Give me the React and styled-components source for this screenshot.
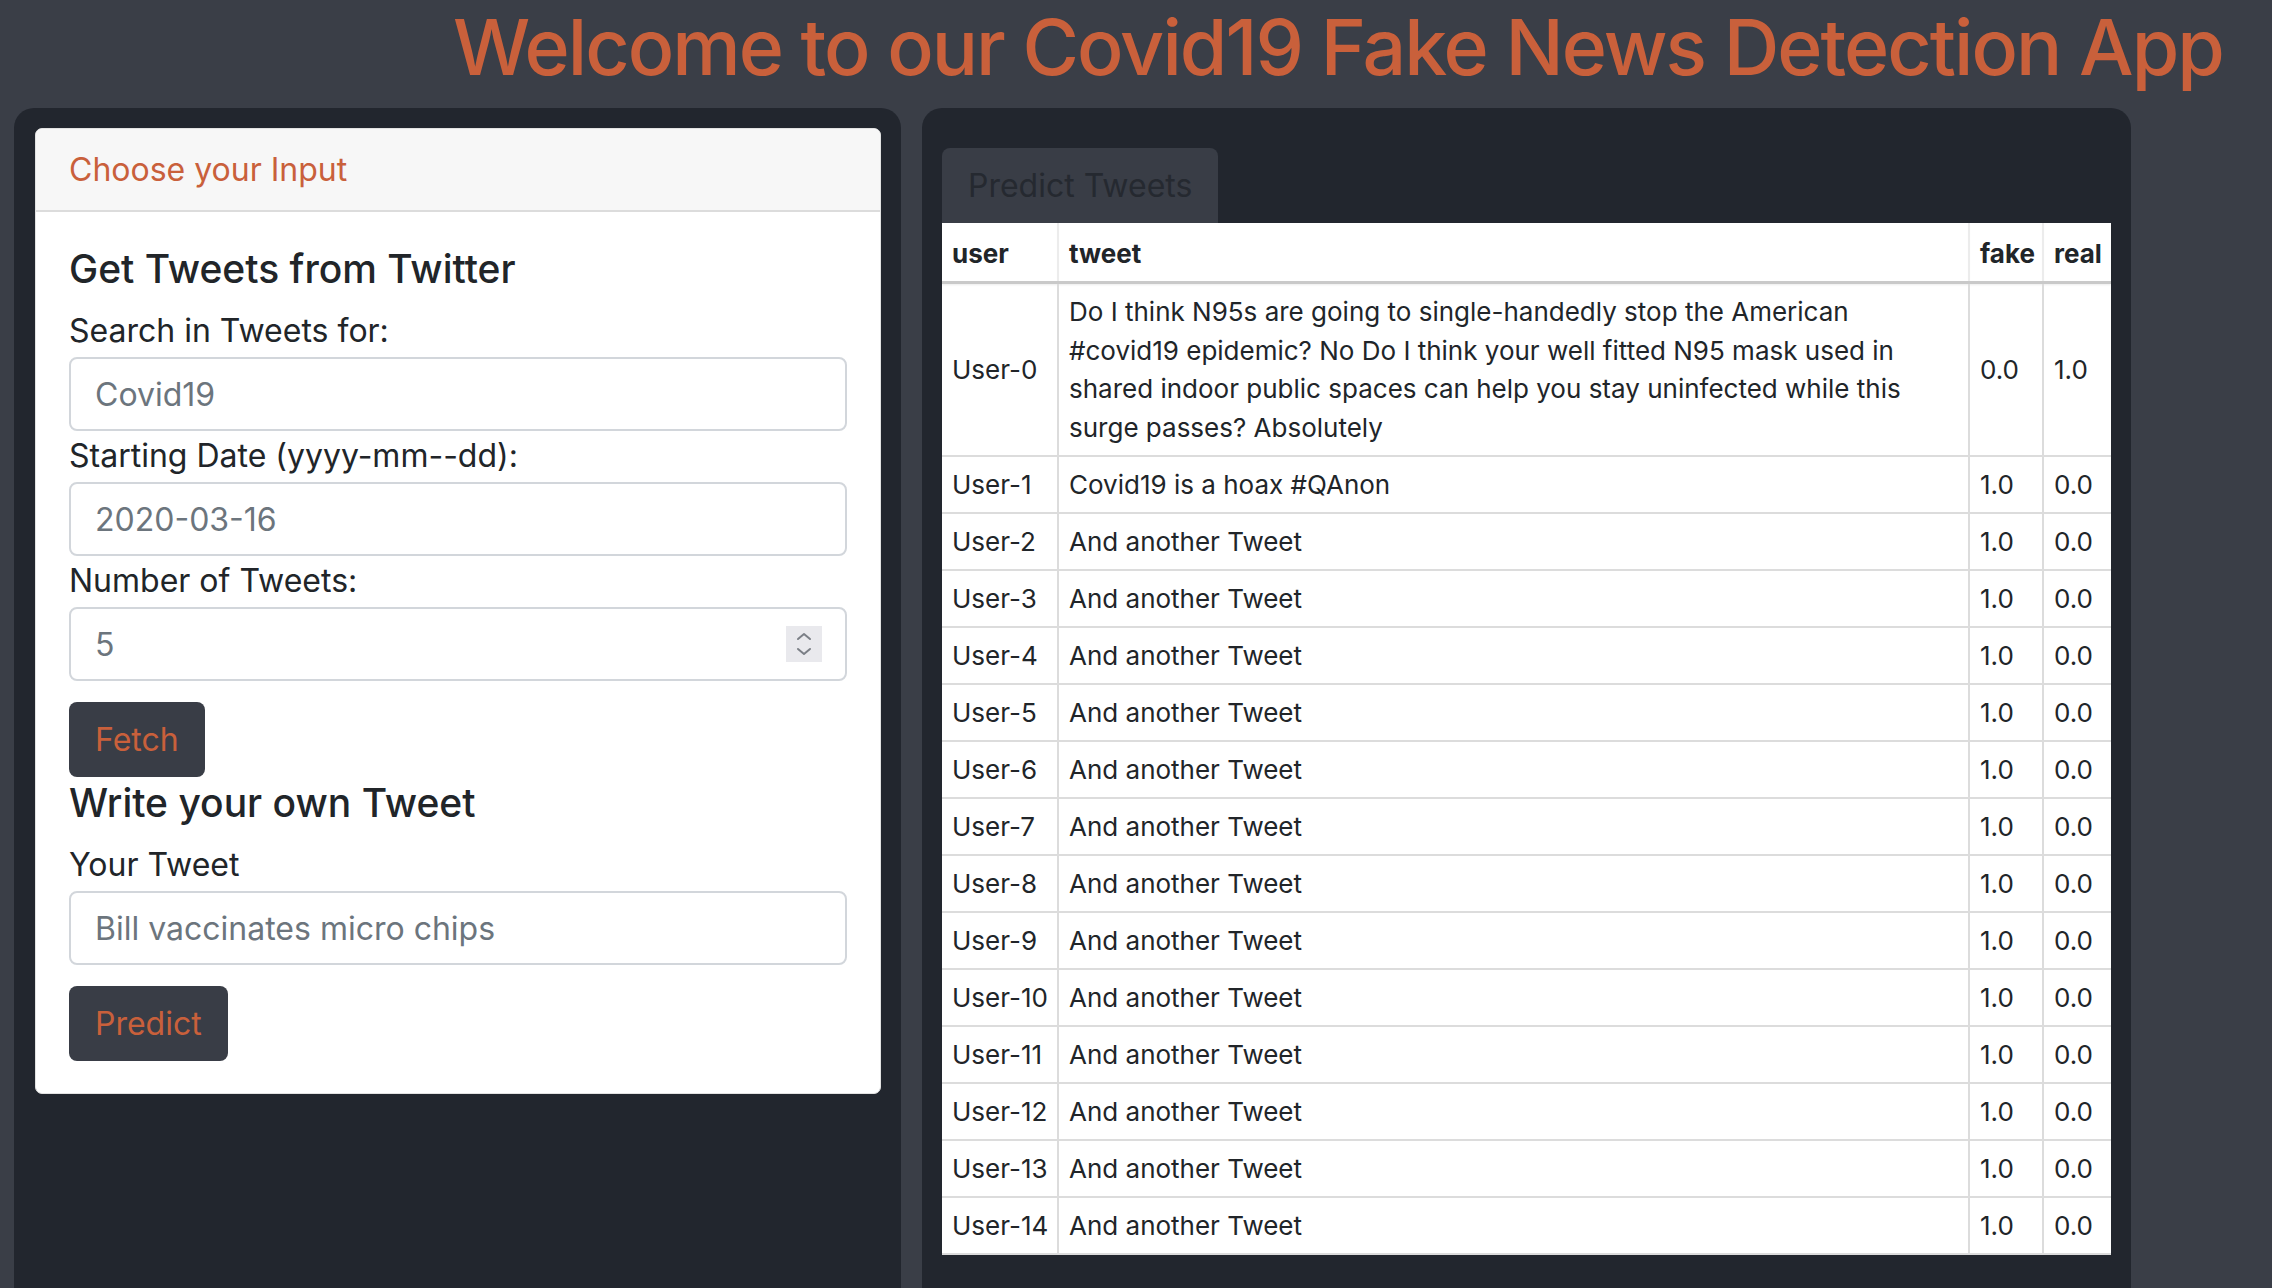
import React from "react";
import styled, { createGlobalStyle } from "styled-components";

const GlobalStyle = createGlobalStyle`
  html, body { margin: 0; padding: 0; }
  body {
    background: #3a3e47;
    font-family: Inter, "Noto Sans", sans-serif;
    color: #212529;
  }
  * { box-sizing: border-box; }
`;

const ORANGE = "#c9603b";

const Page = styled.div`
  width: 2272px;
  height: 1288px;
  overflow: hidden;
  display: flex;
  flex-direction: column;
`;

const Header = styled.header`
  height: 108px;
  flex: none;
  padding: 0 49px 0 0;
  display: flex;
  justify-content: flex-end;
  align-items: flex-start;
`;

const Title = styled.h1`
  margin: 0;
  font-size: 77px;
  line-height: 94px;
  font-weight: 500;
  letter-spacing: -1.95px;
  color: ${ORANGE};
  white-space: nowrap;
`;

const Main = styled.main`
  flex: 1;
  display: flex;
  gap: 21px;
  padding-left: 14px;
  min-height: 0;
`;

const Panel = styled.section`
  flex: none;
  width: ${(p) => p.$w}px;
  background: #22262e;
  border-radius: 20px 20px 0 0;
  padding: ${(p) => p.$pad};
`;

const Card = styled.div`
  background: #fff;
  border: 1px solid #e2e2e2;
  border-radius: 7px;
  overflow: hidden;
`;

const CardHeader = styled.div`
  background: #f7f7f7;
  border-bottom: 2px solid #dcdcdc;
  padding: 17px 33px 16px;
  font-size: 32px;
  line-height: 48px;
  color: ${ORANGE};
`;

const CardBody = styled.div`
  padding: 32px 33px;
  display: flex;
  flex-direction: column;
  align-items: flex-start;
`;

const Heading = styled.h5`
  margin: ${(p) => p.$mt || 0}px 0 13px;
  font-size: 39px;
  line-height: 50px;
  font-weight: 500;
  color: #212529;
`;

const Label = styled.label`
  display: block;
  font-size: 32px;
  line-height: 48px;
  margin-bottom: 2px;
  color: #212529;
`;

const Field = styled.div`
  align-self: stretch;
  height: 74px;
  border: 2px solid #d2d6db;
  border-radius: 8px;
  display: flex;
  align-items: center;
  padding: 0 24px;
  margin-bottom: ${(p) => p.$mb || 0}px;
  background: #fff;
`;

const TextInput = styled.input`
  flex: 1;
  min-width: 0;
  border: none;
  outline: none;
  padding: 0;
  font-family: inherit;
  font-size: 32px;
  color: #6c757d;
  background: transparent;
  &::placeholder { color: #6c757d; opacity: 1; }
`;

const Spinner = styled.span`
  flex: none;
  width: 36px;
  height: 36px;
  margin-right: -1px;
  background: #e9e9ed;
  display: flex;
  align-items: center;
  justify-content: center;
`;

const Button = styled.button`
  height: 75px;
  padding: 0 26px;
  margin-top: 21px;
  border: none;
  border-radius: 8px;
  background: #393d46;
  color: ${ORANGE};
  font-family: inherit;
  font-size: 32px;
  line-height: 48px;
  cursor: pointer;
`;

const Tab = styled.div`
  display: inline-block;
  height: 75px;
  padding: 14px 26px 13px;
  background: #393d46;
  border-radius: 8px 8px 0 0;
  color: #252930;
  font-size: 32px;
  line-height: 48px;
`;

const Table = styled.table`
  width: 1169px;
  border-collapse: collapse;
  table-layout: fixed;
  background: #fff;
  font-size: 26px;
  color: #212529;
`;

const Th = styled.th`
  text-align: left;
  font-weight: 700;
  line-height: 38px;
  padding: 12px 7px 8px 10px;
  border-left: 2px solid #ececec;
  border-bottom: 3px solid #c9c9c9;
  box-shadow: 0 2px 2px rgba(0, 0, 0, 0.08);
  white-space: nowrap;
  &:first-child { border-left: none; }
`;

const Td = styled.td`
  line-height: ${(p) => (p.$multi ? "38.5px" : "38px")};
  padding: 9px 7px 8px 10px;
  vertical-align: middle;
  white-space: nowrap;
  border-top: 2px solid #dcdcdc;
  border-left: 2px solid #dcdcdc;
  &:first-child { border-left: none; }
`;

const Tr = styled.tr`
  &:last-child td { border-bottom: 2px solid #dcdcdc; }
`;

function Chevrons() {
  return (
    <svg width="16" height="26" viewBox="0 0 16 26" fill="none" stroke="#7b7f86" strokeWidth="2" strokeLinecap="round" strokeLinejoin="round">
      <polyline points="2,8 8,3 14,8" />
      <polyline points="2,18 8,23 14,18" />
    </svg>
  );
}

const rows = [
  {
    user: "User-0",
    tweet: [
      "Do I think N95s are going to single-handedly stop the American",
      "#covid19 epidemic? No Do I think your well fitted N95 mask used in",
      "shared indoor public spaces can help you stay uninfected while this",
      "surge passes? Absolutely",
    ],
    fake: "0.0",
    real: "1.0",
  },
  { user: "User-1", tweet: ["Covid19 is a hoax #QAnon"], fake: "1.0", real: "0.0" },
  ...Array.from({ length: 13 }, (_, i) => ({
    user: `User-${i + 2}`,
    tweet: ["And another Tweet"],
    fake: "1.0",
    real: "0.0",
  })),
];

export default function App() {
  return (
    <Page>
      <GlobalStyle />
      <Header>
        <Title>Welcome to our Covid19 Fake News Detection App</Title>
      </Header>
      <Main>
        <Panel $w={887} $pad="20px 20px 0 21px">
          <Card>
            <CardHeader>Choose your Input</CardHeader>
            <CardBody>
              <Heading>Get Tweets from Twitter</Heading>
              <Label>Search in Tweets for:</Label>
              <Field $mb={1}>
                <TextInput placeholder="Covid19" />
              </Field>
              <Label>Starting Date (yyyy-mm--dd):</Label>
              <Field $mb={1}>
                <TextInput placeholder="2020-03-16" />
              </Field>
              <Label>Number of Tweets:</Label>
              <Field>
                <TextInput placeholder="5" />
                <Spinner>
                  <Chevrons />
                </Spinner>
              </Field>
              <Button>Fetch</Button>
              <Heading $mt={1}>Write your own Tweet</Heading>
              <Label>Your Tweet</Label>
              <Field>
                <TextInput placeholder="Bill vaccinates micro chips" />
              </Field>
              <Button>Predict</Button>
            </CardBody>
          </Card>
        </Panel>
        <Panel $w={1209} $pad="40px 20px 0 20px">
          <Tab>Predict Tweets</Tab>
          <Table>
            <colgroup>
              <col style={{ width: 116 }} />
              <col style={{ width: 911 }} />
              <col style={{ width: 74 }} />
              <col style={{ width: 68 }} />
            </colgroup>
            <thead>
              <tr>
                <Th>user</Th>
                <Th>tweet</Th>
                <Th>fake</Th>
                <Th>real</Th>
              </tr>
            </thead>
            <tbody>
              {rows.map((r) => (
                <Tr key={r.user}>
                  <Td>{r.user}</Td>
                  <Td $multi={r.tweet.length > 1}>
                    {r.tweet.map((line, i) => (
                      <React.Fragment key={i}>
                        {i > 0 && <br />}
                        {line}
                      </React.Fragment>
                    ))}
                  </Td>
                  <Td>{r.fake}</Td>
                  <Td>{r.real}</Td>
                </Tr>
              ))}
            </tbody>
          </Table>
        </Panel>
      </Main>
    </Page>
  );
}
